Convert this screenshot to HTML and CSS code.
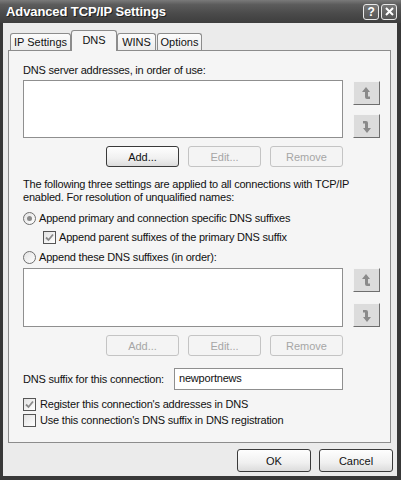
FILE: index.html
```html
<!DOCTYPE html>
<html>
<head>
<meta charset="utf-8">
<link rel="stylesheet" href="styles.css">
</head>
<body>
<div class="window">
  <div class="titlebar">
    <span class="title">Advanced TCP/IP Settings</span>
    <div class="tbtns">
      <span class="tbtn">?</span>
      <span class="tbtn">
        <svg width="9" height="9" viewBox="0 0 9 9"><path d="M1 1 L8 8 M8 1 L1 8" stroke="#fff" stroke-width="2"/></svg>
      </span>
    </div>
  </div>
  <div class="client">
    <div class="tabs">
      <div class="tab t-ip">IP Settings</div>
      <div class="tab sel t-dns">DNS</div>
      <div class="tab t-wins">WINS</div>
      <div class="tab t-opt">Options</div>
    </div>
    <div class="panel">
      <div class="label first">DNS server addresses, in order of use:</div>
      <div class="listrow">
        <div class="list"></div>
        <div class="arrows">
          <div class="abtn">
            <svg width="10" height="13" viewBox="0 0 10 13"><path d="M4 0 L0 5 L3 5 L3 10 Q3 12 5 12 L8 12 L8 9.5 L6 9.5 L6 5 L8 5 L4 0 Z" fill="#8a8a8a"/></svg>
          </div>
          <div class="abtn">
            <svg width="10" height="13" viewBox="0 0 10 13"><path d="M5 13 L9 8 L6 8 L6 3 Q6 1 4 1 L1 1 L1 3.5 L3 3.5 L3 8 L1 8 L5 13 Z" fill="#8a8a8a"/></svg>
          </div>
        </div>
      </div>
      <div class="btnrow">
        <button class="btn">Add...</button>
        <button class="btn dis">Edit...</button>
        <button class="btn dis">Remove</button>
      </div>
      <p class="para">The following three settings are applied to all connections with TCP/IP<br>enabled. For resolution of unqualified names:</p>
      <div class="opt r1"><span class="radio on"></span>Append primary and connection specific DNS suffixes</div>
      <div class="opt c1"><span class="check on"><svg width="9" height="9" viewBox="0 0 9 9"><path d="M1 4.5 L3.5 7 L8 1.5" stroke="#8a8a8a" stroke-width="1.8" fill="none"/></svg></span>Append parent suffixes of the primary DNS suffix</div>
      <div class="opt r2"><span class="radio"></span>Append these DNS suffixes (in order):</div>
      <div class="listrow second">
        <div class="list"></div>
        <div class="arrows">
          <div class="abtn">
            <svg width="10" height="13" viewBox="0 0 10 13"><path d="M4 0 L0 5 L3 5 L3 10 Q3 12 5 12 L8 12 L8 9.5 L6 9.5 L6 5 L8 5 L4 0 Z" fill="#8a8a8a"/></svg>
          </div>
          <div class="abtn">
            <svg width="10" height="13" viewBox="0 0 10 13"><path d="M5 13 L9 8 L6 8 L6 3 Q6 1 4 1 L1 1 L1 3.5 L3 3.5 L3 8 L1 8 L5 13 Z" fill="#8a8a8a"/></svg>
          </div>
        </div>
      </div>
      <div class="btnrow">
        <button class="btn dis">Add...</button>
        <button class="btn dis">Edit...</button>
        <button class="btn dis">Remove</button>
      </div>
      <div class="suffixrow">
        <span class="slabel">DNS suffix for this connection:</span>
        <div class="input">newportnews</div>
      </div>
      <div class="opt c2"><span class="check on"><svg width="9" height="9" viewBox="0 0 9 9"><path d="M1 4.5 L3.5 7 L8 1.5" stroke="#8a8a8a" stroke-width="1.8" fill="none"/></svg></span>Register this connection's addresses in DNS</div>
      <div class="opt c3"><span class="check"></span>Use this connection's DNS suffix in DNS registration</div>
    </div>
    <div class="footer">
      <button class="btn big">OK</button>
      <button class="btn big">Cancel</button>
    </div>
  </div>
</div>
</body>
</html>
```

FILE: styles.css
```css
* { box-sizing: border-box; }
html, body { margin: 0; padding: 0; background: #2a2a2a; }
body {
  font-family: "Liberation Sans", Arial, sans-serif;
  font-size: 11px;
  letter-spacing: -0.2px;
  color: #111;
}
.window {
  width: 401px;
  height: 480px;
  background: #383838;
  display: flex;
  flex-direction: column;
  padding: 0 4px 4px 3px;
}
.titlebar {
  height: 23px;
  margin: 0 -4px 0 -3px;
  background: linear-gradient(#7a7a7a 0%, #5c5c5c 20%, #4a4a4a 60%, #3e3e3e 100%);
  display: flex;
  align-items: center;
  justify-content: space-between;
  padding: 0 4px 0 6px;
}
.title {
  font-family: "Liberation Sans", Arial, sans-serif;
  font-weight: bold;
  font-size: 13px;
  letter-spacing: -0.1px;
  color: #fff;
  text-shadow: 1px 1px 0 #222;
}
.tbtns { display: flex; gap: 2px; }
.tbtn {
  width: 16px;
  height: 16px;
  border: 1px solid #e8e8e8;
  border-radius: 3px;
  background: linear-gradient(#777, #555);
  color: #fff;
  font-weight: bold;
  font-size: 12px;
  display: flex;
  align-items: center;
  justify-content: center;
}
.client {
  flex: 1;
  background: #ebebeb;
  padding: 7px 6px 0 5px;
  display: flex;
  flex-direction: column;
}
.tabs {
  display: flex;
  align-items: flex-end;
  height: 20px;
  padding-left: 2px;
  position: relative;
  z-index: 1;
}
.tab {
  height: 17px;
  border: 1px solid #8c8c8c;
  border-bottom: none;
  border-radius: 3px 3px 0 0;
  background: linear-gradient(#fcfcfc, #ececec);
  text-align: center;
  line-height: 16px;
  letter-spacing: 0;
  margin-right: 1px;
}
.t-ip { width: 61px; }
.t-dns { width: 46px; }
.t-wins { width: 39px; }
.t-opt { width: 45px; }
.tab.sel {
  height: 21px;
  margin-bottom: -1px;
  background: #f5f5f5;
  line-height: 18px;
  margin-left: -1px;
  margin-right: 0;
}
.panel {
  height: 393px;
  border: 1px solid #8c8c8c;
  background: #f5f5f5;
  padding: 0 0 0 14px;
  display: flex;
  flex-direction: column;
}
.label.first { margin-top: 12px; height: 14px; line-height: 14px; }
.listrow {
  display: flex;
  margin-top: 3px;
  height: 58px;
}
.listrow.second { margin-top: 3px; height: 59px; }
.list {
  width: 320px;
  height: 100%;
  background: #fff;
  border: 1px solid #8f8f8f;
}
.arrows {
  margin-left: 10px;
  padding-top: 1px;
  display: flex;
  flex-direction: column;
  justify-content: space-between;
}
.listrow.second .arrows { padding-top: 0; }
.abtn {
  width: 27px;
  height: 24px;
  background: #dcdcdc;
  border-top: 1px solid #f4f4f4;
  border-left: 1px solid #f4f4f4;
  border-right: 1px solid #6e6e6e;
  border-bottom: 1px solid #6e6e6e;
  display: flex;
  align-items: center;
  justify-content: center;
}
.btnrow {
  display: flex;
  justify-content: flex-end;
  gap: 9px;
  width: 320px;
  margin-top: 8px;
}
.btn {
  font-family: "Liberation Sans", Arial, sans-serif;
  font-size: 11px;
  width: 73px;
  height: 21px;
  border: 1px solid #3a3a3a;
  border-radius: 3px;
  background: linear-gradient(#fefefe, #f0f0f0 60%, #dcdcdc);
  color: #111;
  padding: 0;
  margin: 0;
}
.btn.dis {
  border-color: #c4c4c4;
  color: #a6a6a6;
  background: #f4f4f4;
}
.para {
  margin: 11px 0 0;
  line-height: 13px;
}
.opt {
  display: flex;
  align-items: center;
  height: 16px;
}
.opt.r1 { margin-top: 6px; }
.opt.c1 { margin-top: 3px; padding-left: 20px; }
.opt.r2 { margin-top: 4px; }
.opt.c2 { margin-top: 6px; }
.opt.c3 { margin-top: 0; }
.radio {
  width: 13px;
  height: 13px;
  border: 1px solid #6f6f6f;
  border-radius: 50%;
  background: linear-gradient(135deg, #e2e2e2, #fff);
  margin-right: 3px;
  display: flex;
  align-items: center;
  justify-content: center;
}
.radio.on::after {
  content: "";
  width: 5px;
  height: 5px;
  border-radius: 50%;
  background: #8a8a8a;
}
.check {
  width: 13px;
  height: 13px;
  border: 1px solid #555;
  background: linear-gradient(135deg, #e2e2e2, #fff);
  margin-right: 3px;
  display: flex;
  align-items: center;
  justify-content: center;
}
.opt.c2 .check, .opt.c3 .check { margin-right: 4px; }
.suffixrow {
  display: flex;
  align-items: center;
  margin-top: 12px;
  height: 22px;
  width: 320px;
}
.slabel { width: 151px; white-space: nowrap; }
.input {
  flex: 1;
  height: 22px;
  background: #fff;
  border: 1px solid #8f8f8f;
  padding: 0 4px;
  line-height: 19px;
}
.footer {
  display: flex;
  justify-content: flex-end;
  gap: 8px;
  margin-top: 6px;
  margin-right: -2px;
}
.btn.big { width: 74px; height: 23px; }
```
